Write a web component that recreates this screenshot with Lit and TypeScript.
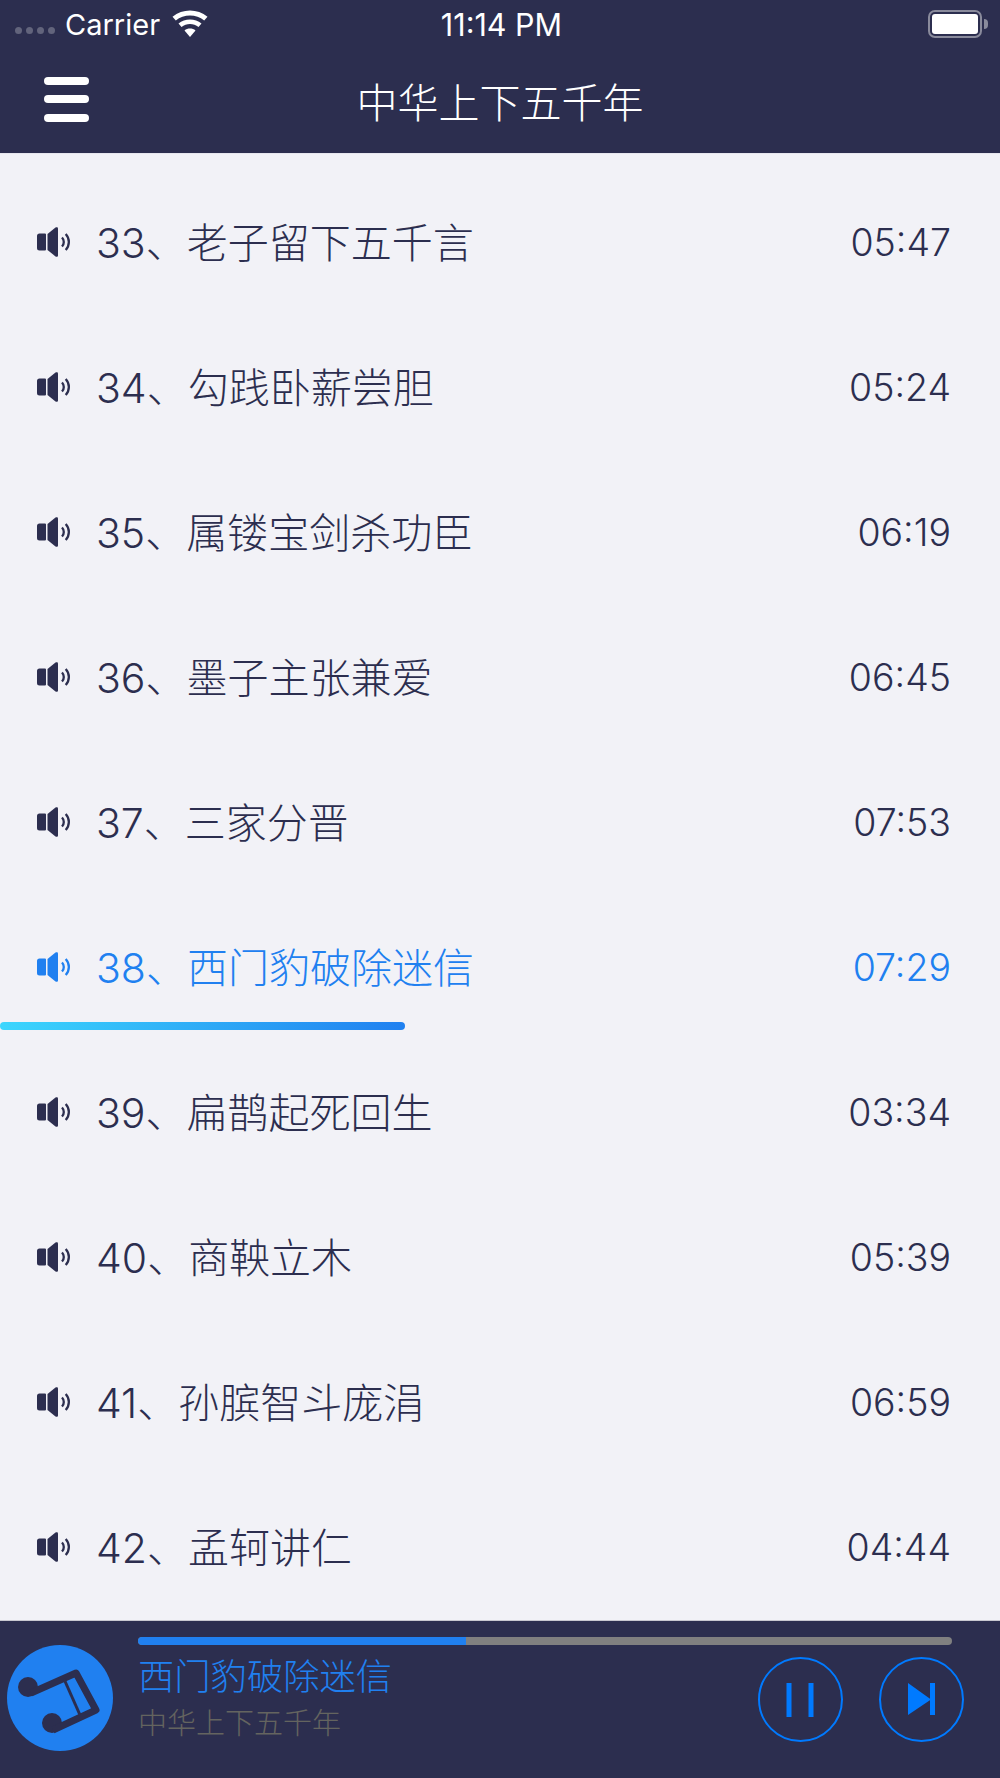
import { LitElement, html, css, svg } from "lit";
import { customElement } from "lit/decorators.js";

const tracks: [string, string, string][] = [
  ["33", "老子留下五千言", "05:47"],
  ["34", "勾践卧薪尝胆", "05:24"],
  ["35", "属镂宝剑杀功臣", "06:19"],
  ["36", "墨子主张兼爱", "06:45"],
  ["37", "三家分晋", "07:53"],
  ["38", "西门豹破除迷信", "07:29"],
  ["39", "扁鹊起死回生", "03:34"],
  ["40", "商鞅立木", "05:39"],
  ["41", "孙膑智斗庞涓", "06:59"],
  ["42", "孟轲讲仁", "04:44"],
];
const ACTIVE = "38";

const speaker = html`<svg class="spk" viewBox="0 0 34 30" width="34" height="30">
  <path d="M2.500 6.500h5.500a1 1 0 0 1 1 1v15a1 1 0 0 1-1 1H2.500a2.500 2.500 0 0 1-2.500-2.500V9a2.500 2.500 0 0 1 2.500-2.500z" fill="currentColor"/>
  <path d="M10.500 7 18.500.6c1.100-.8 2.500-.4 2.500 1v26.800c0 1.400-1.400 1.800-2.500 1l-8-6.400z" fill="currentColor"/>
  <path d="M25 10.500c2.400 2.500 2.400 6.500 0 9" fill="none" stroke="currentColor" stroke-width="2.300"/>
  <path d="M28.700 7c4.200 4.500 4.200 11.500 0 16" fill="none" stroke="currentColor" stroke-width="2.300"/>
</svg>`;

@customElement("app-root")
export class AppRoot extends LitElement {
  static styles = css`
    :host {
      display: block;
      width: 1000px;
      height: 1778px;
      background: #f2f2f7;
      font-family: "Inter", "Noto Sans CJK SC", sans-serif;
      color: #2c2e4f;
      overflow: hidden;
    }
    .page { display: flex; flex-direction: column; height: 1778px; }
    .top { background: #2c2e4f; color: #fff; height: 153px; flex: none; display: flex; flex-direction: column; }
    .status { height: 48px; display: grid; grid-template-columns: 1fr auto 1fr; align-items: center; padding: 0 12px 0 15px; font-size: 29px; }
    .status-left { display: flex; align-items: center; }
    .dots { display: flex; gap: 4px; margin: 12px 10px 0 0; }
    .dots i { width: 7px; height: 7px; border-radius: 50%; background: #62647c; }
    .carrier { font-family: "Inter", sans-serif; margin-right: 12px; }
    .clock { font-family: "Inter", sans-serif; font-size: 30.500px; }
    .status-right { justify-self: end; display: flex; align-items: center; }
    .battery { width: 54px; height: 28px; box-sizing: border-box; border: 2px solid #8a8b9c; border-radius: 7px; padding: 2px; }
    .battery b { display: block; height: 100%; background: #fff; border-radius: 3px; }
    .nub { width: 4px; height: 10px; margin-left: 2px; background: #8a8b9c; border-radius: 0 5px 5px 0; }
    .nav { flex: 1; display: grid; grid-template-columns: 1fr auto 1fr; align-items: center; padding: 0 44px 2px; }
    .menu { display: flex; flex-direction: column; gap: 10.500px; width: 45px; margin-top: -1px; }
    .menu i { height: 8px; border-radius: 4px; background: #fff; }
    .nav-title { font-family: "Noto Sans CJK SC", sans-serif; font-weight: 300; font-size: 41px; }
    .list { flex: 1; padding-top: 16px; border-top: 1px solid #e6e6ee; box-sizing: border-box; }
    .row { position: relative; height: 145px; display: flex; align-items: center; padding: 0 49px 0 37px; font-weight: 300; }
    .row.active { color: #2080f0; }
    .spk { flex: none; margin: -2px 26px 0 0; }
    .name { flex: 1; font-family: "Noto Sans CJK SC", sans-serif; font-size: 41px; font-weight: 300; white-space: nowrap; margin-bottom: 6px; }
    .num { font-family: "Inter", sans-serif; font-weight: 300; font-size: 41px; margin-left: -1px; }
    .time { font-family: "Inter", sans-serif; font-weight: 300; font-size: 37.500px; }
    .under { position: absolute; left: 0; bottom: 10px; width: 405px; height: 8px; border-radius: 4px; background: linear-gradient(90deg, #3cd6fd, #2080f0); }
    .player { flex: none; height: 158px; background: #2c2e4f; border-top: 1px solid #c8c8d0; box-sizing: border-box; display: flex; }
    .cover { flex: none; margin: 24px 0 0 7px; width: 106px; height: 106px; }
    .body { flex: 1; padding: 16px 48px 0 25px; display: flex; flex-direction: column; }
    .progress { height: 8px; border-radius: 4px; background: #808080; overflow: hidden; }
    .progress b { display: block; width: 328px; height: 100%; background: #2080f0; }
    .info { display: flex; align-items: center; justify-content: space-between; }
    .titles { font-family: "Noto Sans CJK SC", sans-serif; font-weight: 300; }
    .t1 { color: #2080f0; font-size: 36.300px; line-height: 46px; margin-top: 5px; }
    .t2 { color: #64645f; font-size: 29px; line-height: 40px; margin-top: 4px; }
    .ctrls { display: flex; gap: 36px; margin: 12px -12px 0 0; }
    .ctrls svg { display: block; }
  `;

  render() {
    return html`<div class="page">
      <div class="top">
        <div class="status">
          <div class="status-left">
            <div class="dots"><i></i><i></i><i></i><i></i></div>
            <span class="carrier">Carrier</span>
            <svg width="36" height="28" viewBox="0 0 36 28">
              <path d="M18 27 12.500 20.500c3-2.600 8-2.600 11 0z" fill="#fff"/>
              <path d="M9.500 17 6.500 13.500c6.400-5.400 16.600-5.400 23 0L26.500 17c-4.800-4-12.200-4-17 0z" fill="#fff"/>
              <path d="M3.800 10.500 0.500 6.800c10-8.500 25-8.500 35 0L32.200 10.500c-8-6.800-20.400-6.800-28.400 0z" fill="#fff"/>
            </svg>
          </div>
          <span class="clock">11:14 PM</span>
          <div class="status-right">
            <div class="battery"><b></b></div><span class="nub"></span>
          </div>
        </div>
        <div class="nav">
          <div class="menu"><i></i><i></i><i></i></div>
          <div class="nav-title">中华上下五千年</div>
          <div></div>
        </div>
      </div>
      <div class="list">
        ${tracks.map(([n, t, d]) => html`<div class="row ${n === ACTIVE ? "active" : ""}">
          ${speaker}
          <div class="name"><span class="num">${n}</span>、${t}</div>
          <div class="time">${d}</div>
          ${n === ACTIVE ? html`<div class="under"></div>` : ""}
        </div>`)}
      </div>
      <div class="player">
        <svg class="cover" viewBox="0 0 106 106">
          <circle cx="53" cy="53" r="53" fill="#2080f0"/>
          ${svg`<g transform="translate(-7 -15)" fill="#2c2e4f" stroke="#2c2e4f" stroke-linejoin="round">
            <circle cx="28" cy="57" r="10" stroke="none"/>
            <circle cx="52" cy="93" r="10" stroke="none"/>
            <path d="M31 63 76 43 96 80 53 100" fill="none" stroke-width="7"/>
            <path d="M64 49 80 85" fill="none" stroke-width="3"/>
          </g>`}
        </svg>
        <div class="body">
          <div class="progress"><b></b></div>
          <div class="info">
            <div class="titles">
              <div class="t1">西门豹破除迷信</div>
              <div class="t2">中华上下五千年</div>
            </div>
            <div class="ctrls">
              <svg width="85" height="85" viewBox="0 0 85 85">
                <circle cx="42.500" cy="42.500" r="41.500" fill="none" stroke="#007aff" stroke-width="2"/>
                <rect x="28.500" y="26" width="5" height="34" fill="#007aff"/>
                <rect x="50.500" y="26" width="5" height="34" fill="#007aff"/>
              </svg>
              <svg width="85" height="85" viewBox="0 0 85 85">
                <circle cx="42.500" cy="42.500" r="41.500" fill="none" stroke="#007aff" stroke-width="2"/>
                <path d="M29 26 52 42.500 29 58z" fill="#007aff"/>
                <rect x="51" y="26" width="5" height="32" fill="#007aff"/>
              </svg>
            </div>
          </div>
        </div>
      </div>
    </div>`;
  }
}
